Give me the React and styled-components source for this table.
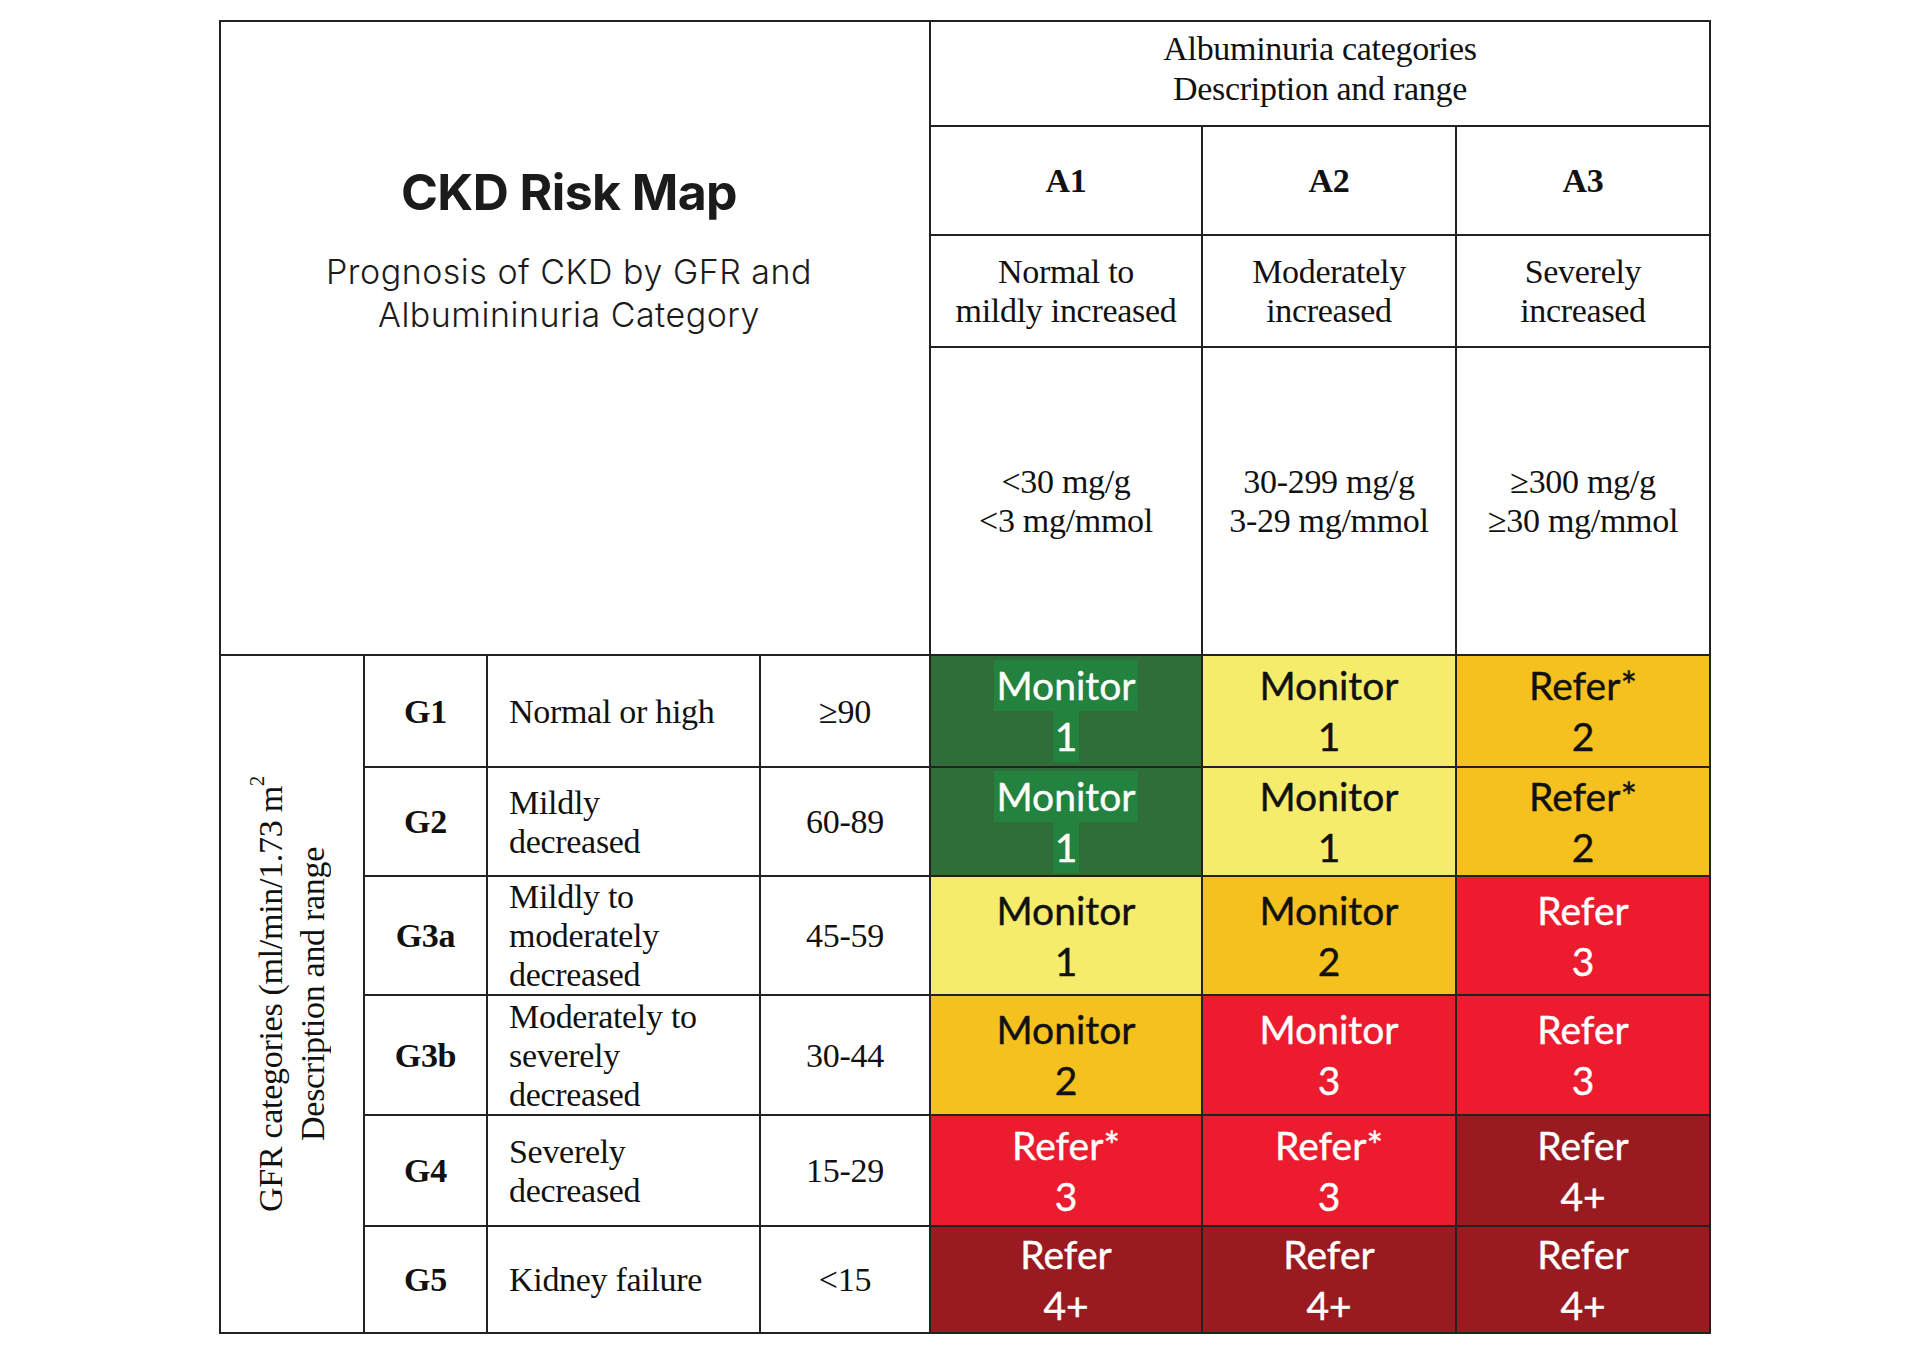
import styled, { createGlobalStyle } from "styled-components";

const GlobalStyle = createGlobalStyle`
  body {
    margin: 0;
    background: #ffffff;
  }
`;

const palette = {
  green: { bg: "#2f6e38", fg: "#ffffff", mark: "#23823d" },
  yellow: { bg: "#f5ec6c", fg: "#111111" },
  orange: { bg: "#f5c11e", fg: "#111111" },
  red: { bg: "#ec1b2d", fg: "#ffffff" },
  darkred: { bg: "#991b20", fg: "#ffffff" },
};

const gfrRows = [
  {
    code: "G1",
    desc: ["Normal or high"],
    range: "≥90",
    risk: [
      ["green", "Monitor", "1"],
      ["yellow", "Monitor", "1"],
      ["orange", "Refer*", "2"],
    ],
  },
  {
    code: "G2",
    desc: ["Mildly", "decreased"],
    range: "60-89",
    risk: [
      ["green", "Monitor", "1"],
      ["yellow", "Monitor", "1"],
      ["orange", "Refer*", "2"],
    ],
  },
  {
    code: "G3a",
    desc: ["Mildly to", "moderately", "decreased"],
    range: "45-59",
    risk: [
      ["yellow", "Monitor", "1"],
      ["orange", "Monitor", "2"],
      ["red", "Refer", "3"],
    ],
  },
  {
    code: "G3b",
    desc: ["Moderately to", "severely", "decreased"],
    range: "30-44",
    risk: [
      ["orange", "Monitor", "2"],
      ["red", "Monitor", "3"],
      ["red", "Refer", "3"],
    ],
  },
  {
    code: "G4",
    desc: ["Severely", "decreased"],
    range: "15-29",
    risk: [
      ["red", "Refer*", "3"],
      ["red", "Refer*", "3"],
      ["darkred", "Refer", "4+"],
    ],
  },
  {
    code: "G5",
    desc: ["Kidney failure"],
    range: "<15",
    risk: [
      ["darkred", "Refer", "4+"],
      ["darkred", "Refer", "4+"],
      ["darkred", "Refer", "4+"],
    ],
  },
];

const albumin = [
  { code: "A1", desc: ["Normal to", "mildly increased"], range: ["<30 mg/g", "<3 mg/mmol"] },
  { code: "A2", desc: ["Moderately", "increased"], range: ["30-299 mg/g", "3-29 mg/mmol"] },
  { code: "A3", desc: ["Severely", "increased"], range: ["≥300 mg/g", "≥30 mg/mmol"] },
];

const Page = styled.div`
  padding: 20px 0 0 219px;
`;

const Grid = styled.div`
  display: grid;
  width: fit-content;
  grid-template-columns: 142px 121px 271px 168px 270px 252px 252px;
  grid-template-rows: 103px 107px 110px 306px 110px 107px 117px 118px 109px 105px;
  gap: 2px;
  border: 2px solid #222;
  background: #222;
`;

const Cell = styled.div`
  grid-column: ${({ col }) => col};
  grid-row: ${({ row }) => row};
  background: #ffffff;
  color: #111;
  display: flex;
  flex-direction: column;
  align-items: ${({ left }) => (left ? "flex-start" : "center")};
  justify-content: center;
  padding: ${({ left }) => (left ? "0 0 0 21px" : "0")};
  font-family: "Liberation Serif", "Times New Roman", serif;
  font-size: 34px;
  line-height: 39px;
  letter-spacing: -0.3px;
  text-align: ${({ left }) => (left ? "left" : "center")};
  font-weight: ${({ bold }) => (bold ? 700 : 400)};
`;

const TitleBlock = styled.div`
  grid-column: 1 / 5;
  grid-row: 1 / 5;
  background: #ffffff;
  display: flex;
  flex-direction: column;
  align-items: center;
  padding: 140px 12px 0 0;
  color: #1b1b1b;
  font-family: Inter, "Noto Sans", sans-serif;
  text-align: center;
`;

const Title = styled.h1`
  margin: 0;
  font-size: 50px;
  line-height: 60px;
  font-weight: 700;
  letter-spacing: -0.6px;
`;

const Subtitle = styled.p`
  margin: 28px 0 0;
  font-size: 34px;
  line-height: 43px;
  font-weight: 300;
  letter-spacing: 0.5px;
`;

const HeaderCell = styled(Cell)`
  padding-bottom: 9px;
  line-height: 40px;
`;

const SideLabel = styled.div`
  writing-mode: vertical-rl;
  transform: rotate(180deg);
  text-align: center;
  line-height: 42px;
  white-space: nowrap;
`;

const Sup = styled.sup`
  font-size: 21px;
  line-height: 0;
  vertical-align: 14px;
`;

const Risk = styled.div`
  grid-column: ${({ col }) => col};
  grid-row: ${({ row }) => row};
  background: ${({ tone }) => palette[tone].bg};
  color: ${({ tone }) => palette[tone].fg};
  display: flex;
  flex-direction: column;
  align-items: center;
  justify-content: center;
  font-family: Lato, "Open Sans", sans-serif;
  font-size: 39px;
  line-height: 51px;
  -webkit-text-stroke: 0.4px currentColor;
`;

const Mark = styled.span`
  display: inline-block;
  padding: 0 2px;
  background: ${({ tone }) => palette[tone].mark || "transparent"};
`;

const Lines = ({ lines }) =>
  lines.map((l, i) => <div key={i}>{l}</div>);

export default function App() {
  return (
    <Page>
      <GlobalStyle />
      <Grid>
        <TitleBlock>
          <Title>CKD Risk Map</Title>
          <Subtitle>
            Prognosis of CKD by GFR and
            <br />
            Albumininuria Category
          </Subtitle>
        </TitleBlock>

        <HeaderCell col="5 / 8" row="1">
          <div>Albuminuria categories</div>
          <div>Description and range</div>
        </HeaderCell>

        {albumin.map((a, i) => (
          <Cell key={a.code + "c"} col={5 + i} row="2" bold>
            {a.code}
          </Cell>
        ))}
        {albumin.map((a, i) => (
          <Cell key={a.code + "d"} col={5 + i} row="3">
            <Lines lines={a.desc} />
          </Cell>
        ))}
        {albumin.map((a, i) => (
          <Cell key={a.code + "r"} col={5 + i} row="4">
            <Lines lines={a.range} />
          </Cell>
        ))}

        <Cell col="1" row="5 / 11">
          <SideLabel>
            GFR categories (ml/min/1.73 m<Sup>2</Sup>
            <br />
            Description and range
          </SideLabel>
        </Cell>

        {gfrRows.map((g, r) => [
          <Cell key={g.code + "c"} col="2" row={5 + r} bold>
            {g.code}
          </Cell>,
          <Cell key={g.code + "d"} col="3" row={5 + r} left>
            <Lines lines={g.desc} />
          </Cell>,
          <Cell key={g.code + "r"} col="4" row={5 + r}>
            {g.range}
          </Cell>,
          ...g.risk.map(([tone, action, level], c) => (
            <Risk key={g.code + c} col={5 + c} row={5 + r} tone={tone}>
              <div>
                <Mark tone={tone}>{action}</Mark>
              </div>
              <div>
                <Mark tone={tone}>{level}</Mark>
              </div>
            </Risk>
          )),
        ])}
      </Grid>
    </Page>
  );
}
